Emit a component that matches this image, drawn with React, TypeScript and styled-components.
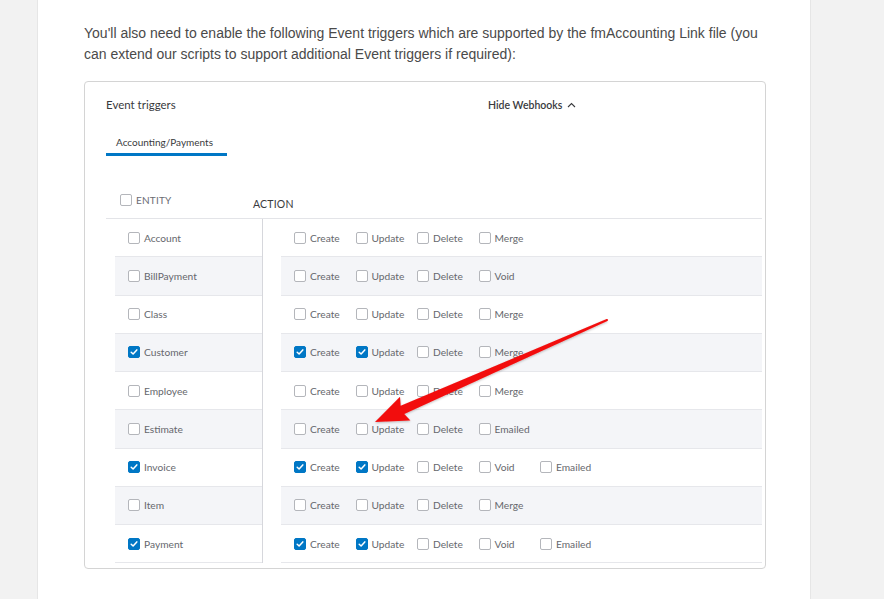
import React from "react";
import styled, { createGlobalStyle } from "styled-components";

const Global = createGlobalStyle`
  html, body { margin: 0; padding: 0; background: #f2f2f2; }
  body { font-family: "Liberation Sans", Arial, sans-serif; }
`;

const Page = styled.div`
  position: relative;
  width: 884px;
  height: 599px;
  overflow: hidden;
  background: #f2f2f2;
`;

const Column = styled.main`
  margin-left: 37px;
  width: 774px;
  height: 599px;
  box-sizing: border-box;
  background: #ffffff;
  border-left: 1px solid #e6e6e6;
  border-right: 1px solid #e6e6e6;
  padding: 23px 0 0 46px;
`;

const Para = styled.p`
  margin: 0 0 16px 0;
  width: 700px;
  font-family: "Liberation Sans", Arial, sans-serif;
  font-size: 14px;
  line-height: 21px;
  color: #4a4a4a;
`;

const Card = styled.section`
  width: 682px;
  height: 488px;
  box-sizing: border-box;
  border: 1px solid #d4d4d4;
  border-radius: 4px;
  padding: 14px 4px 0 21px;
  font-family: "Lato", "Open Sans", sans-serif;
  color: #393a3d;
`;

const CardHead = styled.div`
  display: grid;
  grid-template-columns: 382px auto;
  align-items: center;
  height: 17px;
`;

const Title = styled.div`
  font-size: 11.5px;
  color: #393a3d;
`;

const Toggle = styled.div`
  display: flex;
  align-items: center;
  gap: 5px;
  font-size: 10.5px;
  font-weight: 600;
  color: #393a3d;
`;

const Tabs = styled.div`
  display: flex;
  margin-top: 23px;
`;

const Tab = styled.div<{ $active?: boolean }>`
  padding: 0 10px 4px 10px;
  width: 121px;
  box-sizing: border-box;
  font-size: 10px;
  line-height: 13px;
  color: #393a3d;
  border-bottom: 3px solid ${(p) => (p.$active ? "#0077c5" : "transparent")};
`;

const TableHead = styled.div`
  display: flex;
  align-items: center;
  height: 63px;
  box-sizing: border-box;
  border-bottom: 1px solid #e3e4e8;
  width: 656px;
`;

const HeadEntity = styled.div`
  display: flex;
  align-items: center;
  gap: 4px;
  width: 147px;
  box-sizing: border-box;
  padding: 26px 0 0 14px;
  font-size: 10px;
  color: #6b6c72;
  letter-spacing: 0.2px;
`;

const HeadAction = styled.div`
  padding-top: 34px;
  font-size: 10.5px;
  color: #393a3d;
  letter-spacing: 0.2px;
`;

const Body = styled.div`
  display: flex;
  width: 656px;
`;

const EntityCol = styled.div`
  margin-left: 9px;
  width: 147px;
  border-right: 1px solid #d6d7dc;
`;

const ActionCol = styled.div`
  margin-left: 18px;
  flex: 1;
`;

const Row = styled.div<{ $alt: boolean }>`
  display: flex;
  align-items: center;
  height: 38.25px;
  box-sizing: border-box;
  padding-left: 13px;
  background: ${(p) => (p.$alt ? "#f4f5f8" : "#ffffff")};
  border-bottom: 1px solid #e6e7eb;
`;

const Item = styled.label<{ $w?: number }>`
  display: flex;
  align-items: center;
  gap: 4px;
  width: ${(p) => (p.$w ? `${p.$w}px` : "auto")};
  flex: none;
  font-size: 10.2px;
  color: #66676d;
`;

const Box = styled.span<{ $on: boolean }>`
  display: inline-flex;
  align-items: center;
  justify-content: center;
  width: 12px;
  height: 12px;
  box-sizing: border-box;
  border-radius: 2px;
  border: 1px solid ${(p) => (p.$on ? "#0077c5" : "#b4b6bb")};
  background: ${(p) => (p.$on ? "#0077c5" : "#ffffff")};
  flex: none;
`;

const Overlay = styled.svg`
  position: absolute;
  left: 0;
  top: 0;
  pointer-events: none;
`;

const Check = ({ on }: { on: boolean }) => (
  <Box $on={on}>
    {on && (
      <svg width="8" height="8" viewBox="0 0 8 8">
        <path d="M1.2 4.2 L3.1 6 L6.8 1.9" fill="none" stroke="#fff" strokeWidth="1.5" strokeLinecap="round" strokeLinejoin="round" />
      </svg>
    )}
  </Box>
);

type Ent = { name: string; on: boolean; actions: [string, boolean][] };

const data: Ent[] = [
  { name: "Account", on: false, actions: [["Create", false], ["Update", false], ["Delete", false], ["Merge", false]] },
  { name: "BillPayment", on: false, actions: [["Create", false], ["Update", false], ["Delete", false], ["Void", false]] },
  { name: "Class", on: false, actions: [["Create", false], ["Update", false], ["Delete", false], ["Merge", false]] },
  { name: "Customer", on: true, actions: [["Create", true], ["Update", true], ["Delete", false], ["Merge", false]] },
  { name: "Employee", on: false, actions: [["Create", false], ["Update", false], ["Delete", false], ["Merge", false]] },
  { name: "Estimate", on: false, actions: [["Create", false], ["Update", false], ["Delete", false], ["Emailed", false]] },
  { name: "Invoice", on: true, actions: [["Create", true], ["Update", true], ["Delete", false], ["Void", false], ["Emailed", false]] },
  { name: "Item", on: false, actions: [["Create", false], ["Update", false], ["Delete", false], ["Merge", false]] },
  { name: "Payment", on: true, actions: [["Create", true], ["Update", true], ["Delete", false], ["Void", false], ["Emailed", false]] },
];

export default function App() {
  return (
    <Page>
      <Global />
      <Column>
        <Para>
          You'll also need to enable the following Event triggers which are supported by the fmAccounting Link file (you
          can extend our scripts to support additional Event triggers if required):
        </Para>
        <Card>
          <CardHead>
            <Title>Event triggers</Title>
            <Toggle>
              Hide Webhooks
              <svg width="9" height="6" viewBox="0 0 9 6">
                <path d="M1 5 L4.5 1.5 L8 5" fill="none" stroke="#393a3d" strokeWidth="1.1" />
              </svg>
            </Toggle>
          </CardHead>
          <Tabs>
            <Tab $active>Accounting/Payments</Tab>
          </Tabs>
          <TableHead>
            <HeadEntity>
              <Check on={false} />
              ENTITY
            </HeadEntity>
            <HeadAction>ACTION</HeadAction>
          </TableHead>
          <Body>
            <EntityCol>
              {data.map((e, i) => (
                <Row key={e.name} $alt={i % 2 === 1}>
                  <Item>
                    <Check on={e.on} />
                    {e.name}
                  </Item>
                </Row>
              ))}
            </EntityCol>
            <ActionCol>
              {data.map((e, i) => (
                <Row key={e.name} $alt={i % 2 === 1}>
                  {e.actions.map(([a, on]) => (
                    <Item key={a} $w={61.5}>
                      <Check on={on} />
                      {a}
                    </Item>
                  ))}
                </Row>
              ))}
            </ActionCol>
          </Body>
        </Card>
      </Column>
      <Overlay width="884" height="599" viewBox="0 0 884 599">
        <defs>
          <filter id="sh" x="-10%" y="-10%" width="120%" height="130%">
            <feDropShadow dx="0" dy="1" stdDeviation="1" floodColor="#000" floodOpacity="0.25" />
          </filter>
        </defs>
        <polygon
          filter="url(#sh)"
          fill="#f20d0d"
          points="607.4,320.9 404.3,414.0 410.4,420.6 375,422 400,396.8 400.7,405.8 606.6,319.1"
        />
        <circle cx="607" cy="320" r="1" fill="#f20d0d" />
      </Overlay>
    </Page>
  );
}
